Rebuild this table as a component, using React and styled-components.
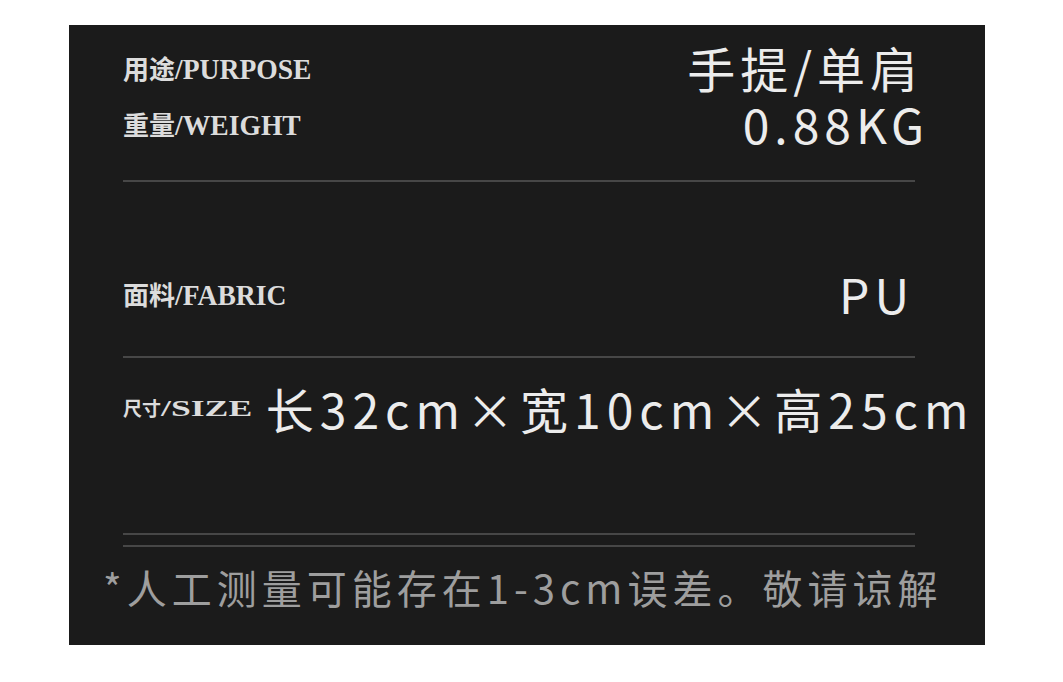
import React from "react";
import styled, { createGlobalStyle } from "styled-components";

const Global = createGlobalStyle`
  html, body { margin: 0; padding: 0; background: #ffffff; }
  body { font-family: "Noto Sans CJK SC", "Noto Sans", sans-serif; }
`;

const Page = styled.div`
  width: 1063px;
  height: 682px;
  padding: 25px 0 0 69px;
  box-sizing: border-box;
`;

const Panel = styled.section`
  width: 916px;
  height: 620px;
  background: #1b1b1b;
  box-sizing: border-box;
  padding: 14px 70px 0 54px;
  display: flex;
  flex-direction: column;
`;

const Row = styled.div`
  height: 56px;
  display: flex;
  align-items: center;
  justify-content: ${(p) => (p.$inline ? "flex-start" : "space-between")};
  gap: ${(p) => p.$gap || 0}px;
  margin-top: ${(p) => p.$mt || 0}px;
  white-space: nowrap;
`;

const Label = styled.span`
  display: inline-flex;
  align-items: baseline;
  color: #dcdcdc;
`;

const LabelCjk = styled.span`
  font-family: "Noto Sans CJK SC", sans-serif;
  font-weight: 700;
  font-size: ${(p) => p.$size || 26}px;
`;

const LabelLatin = styled.span`
  font-family: "Liberation Serif", serif;
  font-weight: 700;
  font-size: ${(p) => p.$size || 30}px;
  display: inline-block;
  transform: scaleX(${(p) => p.$sx || 0.92});
  transform-origin: left center;
`;

const Value = styled.span`
  font-family: "Noto Sans CJK SC", "Noto Sans", sans-serif;
  font-size: ${(p) => p.$size || 48}px;
  line-height: 1.1;
  font-weight: 400;
  color: #ececec;
  letter-spacing: ${(p) => p.$ls ?? 5}px;
  margin-right: ${(p) => p.$mr ?? 0}px;
`;

const Rule = styled.div`
  height: 2px;
  background: #474747;
  margin-top: ${(p) => p.$mt || 0}px;
`;

const Note = styled.p`
  margin: 20px 0 0 -20px;
  font-family: "Noto Sans CJK SC", "Noto Sans", sans-serif;
  font-size: 40px;
  letter-spacing: 5px;
  color: #9e9e9e;
  white-space: nowrap;
  line-height: 1;
`;

export default function App() {
  return (
    <>
      <Global />
      <Page>
        <Panel>
          <Row>
            <Label>
              <LabelCjk>用途</LabelCjk>
              <LabelLatin>/PURPOSE</LabelLatin>
            </Label>
            <Value $mr={-8}>手提/单肩</Value>
          </Row>
          <Row>
            <Label>
              <LabelCjk>重量</LabelCjk>
              <LabelLatin>/WEIGHT</LabelLatin>
            </Label>
            <Value $mr={-14}>0.88KG</Value>
          </Row>
          <Rule $mt={29} />
          <Row $mt={83}>
            <Label>
              <LabelCjk>面料</LabelCjk>
              <LabelLatin>/FABRIC</LabelLatin>
            </Label>
            <Value $mr={1}>PU</Value>
          </Row>
          <Rule $mt={35} />
          <Row $inline $gap={46} $mt={22}>
            <Label>
              <LabelCjk $size={19}>尺寸</LabelCjk>
              <LabelLatin $size={23} $sx={1.55}>/SIZE</LabelLatin>
            </Label>
            <Value $ls={6}>长32cm×宽10cm×高25cm</Value>
          </Row>
          <Rule $mt={97} />
          <Rule $mt={10} />
          <Note>*人工测量可能存在1-3cm误差。敬请谅解</Note>
        </Panel>
      </Page>
    </>
  );
}
